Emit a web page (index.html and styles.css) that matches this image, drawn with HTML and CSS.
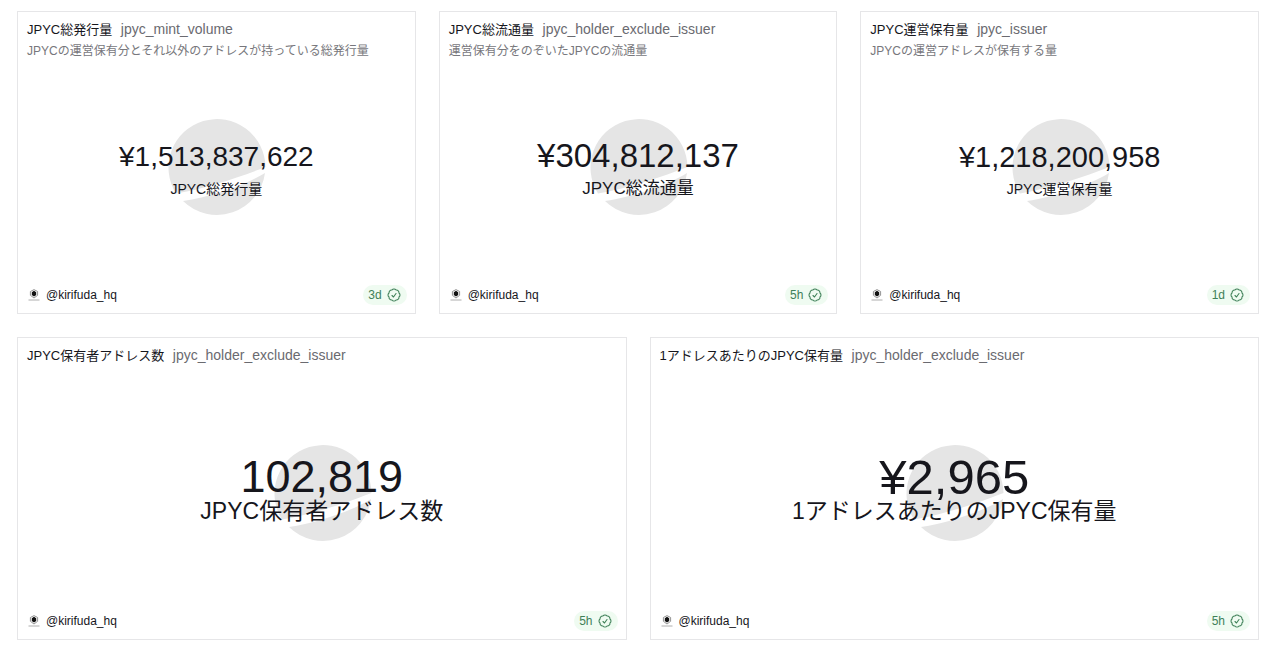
FILE: index.html
```html
<!DOCTYPE html>
<html lang="ja">
<head>
<meta charset="utf-8">
<title>JPYC</title>
<link rel="stylesheet" href="styles.css">
</head>
<body>
<svg class="defs" aria-hidden="true">
  <symbol id="mark" viewBox="0 0 98 98">
    <path d="M8 75.500A48.500 48.500 0 1 1 97.500 49C72 59 36 71 8 75.500Z"/>
    <path d="M15 83C42 79 76 68 97 55A48.500 48.500 0 0 1 15 83Z"/>
  </symbol>
  <symbol id="avatar" viewBox="0 0 12 12">
    <path d="M6 .6 9.600 2.500V6.300L6 9 2.400 6.300V2.500Z" fill="none" stroke="#777" stroke-width=".8"/>
    <path d="M6 1.800 8.200 3.200V5.900L6 7.400 3.800 5.900V3.200Z" fill="#111"/>
    <path d="M.5 11H11.500" stroke="#999" stroke-width=".8"/>
  </symbol>
  <symbol id="verified" viewBox="0 0 24 24">
    <path d="M9 12.75 11.25 15 15 9.75M21 12c0 1.268-.63 2.39-1.593 3.068a3.745 3.745 0 0 1-1.043 3.296 3.745 3.745 0 0 1-3.296 1.043A3.745 3.745 0 0 1 12 21c-1.268 0-2.39-.63-3.068-1.593a3.746 3.746 0 0 1-3.296-1.043 3.745 3.745 0 0 1-1.043-3.296A3.745 3.745 0 0 1 3 12c0-1.268.63-2.39 1.593-3.068a3.745 3.745 0 0 1 1.043-3.296 3.746 3.746 0 0 1 3.296-1.043A3.746 3.746 0 0 1 12 3c1.268 0 2.39.63 3.068 1.593a3.746 3.746 0 0 1 3.296 1.043 3.746 3.746 0 0 1 1.043 3.296A3.745 3.745 0 0 1 21 12Z" fill="none" stroke="currentColor" stroke-width="1.6" stroke-linecap="round" stroke-linejoin="round"/>
  </symbol>
</svg>
<main class="board">
  <section class="row">
    <article class="card">
      <header class="head">
        <h2 class="title">JPYC総発行量 <a class="query" href="#">jpyc_mint_volume</a></h2>
        <p class="desc">JPYCの運営保有分とそれ以外のアドレスが持っている総発行量</p>
      </header>
      <div class="counter counter-s">
        <svg class="mark"><use href="#mark"/></svg>
        <div class="value">¥1,513,837,622</div>
        <div class="label">JPYC総発行量</div>
      </div>
      <footer class="foot">
        <a class="user" href="#"><svg class="avatar"><use href="#avatar"/></svg>@kirifuda_hq</a>
        <button class="age" type="button">3d<svg class="check"><use href="#verified"/></svg></button>
      </footer>
    </article>
    <article class="card">
      <header class="head">
        <h2 class="title">JPYC総流通量 <a class="query" href="#">jpyc_holder_exclude_issuer</a></h2>
        <p class="desc">運営保有分をのぞいたJPYCの流通量</p>
      </header>
      <div class="counter counter-l">
        <svg class="mark"><use href="#mark"/></svg>
        <div class="value">¥304,812,137</div>
        <div class="label">JPYC総流通量</div>
      </div>
      <footer class="foot">
        <a class="user" href="#"><svg class="avatar"><use href="#avatar"/></svg>@kirifuda_hq</a>
        <button class="age" type="button">5h<svg class="check"><use href="#verified"/></svg></button>
      </footer>
    </article>
    <article class="card">
      <header class="head">
        <h2 class="title">JPYC運営保有量 <a class="query" href="#">jpyc_issuer</a></h2>
        <p class="desc">JPYCの運営アドレスが保有する量</p>
      </header>
      <div class="counter counter-m">
        <svg class="mark"><use href="#mark"/></svg>
        <div class="value">¥1,218,200,958</div>
        <div class="label">JPYC運営保有量</div>
      </div>
      <footer class="foot">
        <a class="user" href="#"><svg class="avatar"><use href="#avatar"/></svg>@kirifuda_hq</a>
        <button class="age" type="button">1d<svg class="check"><use href="#verified"/></svg></button>
      </footer>
    </article>
  </section>
  <section class="row">
    <article class="card">
      <header class="head">
        <h2 class="title">JPYC保有者アドレス数 <a class="query" href="#">jpyc_holder_exclude_issuer</a></h2>
      </header>
      <div class="counter counter-xl">
        <svg class="mark"><use href="#mark"/></svg>
        <div class="value">102,819</div>
        <div class="label">JPYC保有者アドレス数</div>
      </div>
      <footer class="foot">
        <a class="user" href="#"><svg class="avatar"><use href="#avatar"/></svg>@kirifuda_hq</a>
        <button class="age" type="button">5h<svg class="check"><use href="#verified"/></svg></button>
      </footer>
    </article>
    <article class="card">
      <header class="head">
        <h2 class="title">1アドレスあたりのJPYC保有量 <a class="query" href="#">jpyc_holder_exclude_issuer</a></h2>
      </header>
      <div class="counter counter-xxl">
        <svg class="mark"><use href="#mark"/></svg>
        <div class="value">¥2,965</div>
        <div class="label">1アドレスあたりのJPYC保有量</div>
      </div>
      <footer class="foot">
        <a class="user" href="#"><svg class="avatar"><use href="#avatar"/></svg>@kirifuda_hq</a>
        <button class="age" type="button">5h<svg class="check"><use href="#verified"/></svg></button>
      </footer>
    </article>
  </section>
</main>
</body>
</html>
```
FILE: styles.css
```css
* { box-sizing: border-box; }
body {
  margin: 0;
  background: #fff;
  color: #16161c;
  font-family: "Liberation Sans", "Noto Sans CJK JP", sans-serif;
}
a { color: inherit; text-decoration: none; }
.defs { display: none; }
.board {
  display: flex;
  flex-direction: column;
  gap: 23px;
  padding: 11px 21px 10px 17px;
}
.row { display: flex; gap: 23px; }
.card {
  flex: 1;
  min-width: 0;
  min-height: 303px;
  display: grid;
  grid-template-rows: 58px 1fr 36px;
  border: 1px solid #e6e6e8;
}
.head { padding: 7px 9px 0; }
.title {
  margin: 0;
  font-size: 13px;
  line-height: 20px;
  font-weight: 400;
}
.query { margin-left: 5px; font-size: 14px; color: #6a6a70; }
.desc { margin: 1px 0 0; font-size: 12px; line-height: 20px; color: #77777c; white-space: nowrap; }
.counter {
  position: relative;
  display: flex;
  flex-direction: column;
  align-items: center;
  justify-content: center;
  padding-bottom: 10px;
  white-space: nowrap;
}
.mark {
  position: absolute;
  top: 50%;
  left: 50%;
  width: 98px;
  height: 98px;
  margin: -56px 0 0 -48px;
  fill: #e5e5e5;
}
.value, .label { position: relative; }
.value { line-height: 40px; }
.counter-s .value { font-size: 28px; }
.counter-m .value { font-size: 29px; }
.counter-l .value { font-size: 33px; }
.counter-xl, .counter-xxl { padding-bottom: 14px; }
.counter-xl .value { font-size: 45px; line-height: 36px; }
.counter-xxl .value { font-size: 49px; line-height: 36px; }
.label { font-size: 14px; line-height: 24px; }
.counter-l .label { font-size: 17px; line-height: 26px; }
.counter-xl .label, .counter-xxl .label { font-size: 23px; line-height: 32px; }
.foot {
  display: flex;
  align-items: center;
  justify-content: space-between;
  padding: 0 8px 0 10px;
  font-size: 12px;
}
.user { display: flex; align-items: center; gap: 6px; }
.avatar { width: 12px; height: 12px; }
.age {
  display: flex;
  align-items: center;
  gap: 4px;
  padding: 0 5px;
  height: 20px;
  border: 0;
  border-radius: 10px;
  background: #effbf1;
  color: #3f8058;
  font: inherit;
}
.check { width: 16px; height: 16px; }
```
